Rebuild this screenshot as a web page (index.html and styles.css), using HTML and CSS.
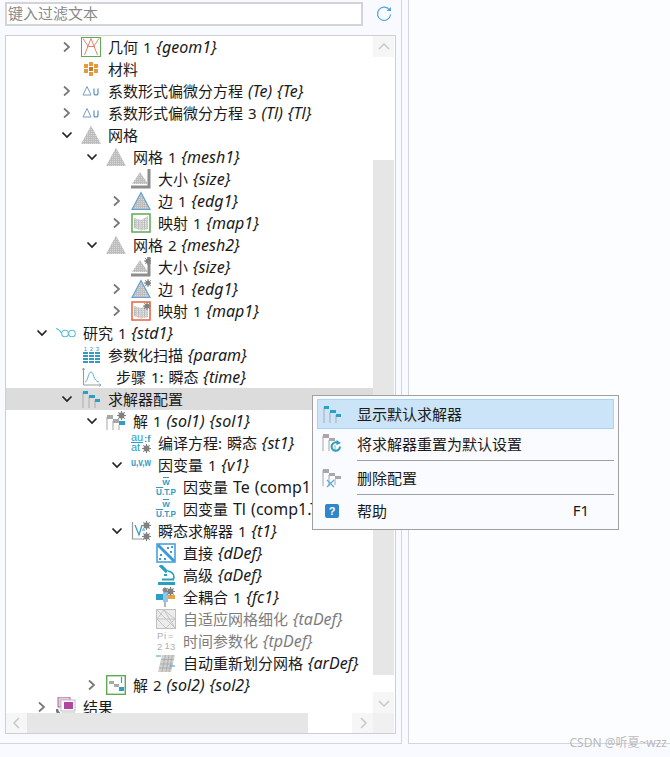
FILE: index.html
```html
<!DOCTYPE html>
<html>
<head>
   <meta charset="UTF-8">
   <link rel="stylesheet" href="styles.css">
</head>
<body>

<!-- icon sheet -->
<svg class="sheet" xmlns="http://www.w3.org/2000/svg">
   <defs>
      <pattern id="dots" width="2" height="2" patternUnits="userSpaceOnUse">
         <rect width="2" height="2" fill="#bcbcbc"/>
         <rect width="1" height="1" fill="#dadada"/>
      </pattern>
   </defs>
   <symbol id="chev-r" viewBox="0 0 12 12"><path d="M3 1.500 L8 6 L3 10.500" fill="none" stroke="#777" stroke-width="1.700"/></symbol>
   <symbol id="chev-d" viewBox="0 0 12 12"><path d="M1.500 3.500 L6 8 L10.500 3.500" fill="none" stroke="#222" stroke-width="1.700"/></symbol>
   <symbol id="gear" viewBox="0 0 8 8"><circle cx="4" cy="4" r="2.600" fill="#808080"/><path d="M4 0V8M0 4H8M1.200 1.200L6.800 6.800M6.800 1.200L1.200 6.800" stroke="#808080" stroke-width="1"/></symbol>
   <symbol id="geom" viewBox="0 0 20 20">
      <rect x=".5" y=".5" width="19" height="19" fill="#fff" stroke="#5cab50"/>
      <path d="M2 1.500 L7 9 M18 1.500 L13 9 M10 1.500 L3.500 18 M10 1.500 L16.500 18 M6 9.500 H14" fill="none" stroke="#e8836c" stroke-width="1"/>
   </symbol>
   <symbol id="material" viewBox="0 0 20 20">
      <g fill="#e59a3b">
         <rect x="8" y="3" width="4" height="4"/><rect x="3" y="5" width="4" height="4"/><rect x="13" y="5" width="4" height="4"/>
         <rect x="8" y="8" width="4" height="4" fill="#c9792a"/><rect x="3" y="10" width="4" height="4"/><rect x="13" y="10" width="4" height="4"/>
         <rect x="8" y="13" width="4" height="4"/>
      </g>
   </symbol>
   <symbol id="delta" viewBox="0 0 20 20">
      <path d="M6 5.500 L10 14 H2 Z" fill="none" stroke="#7d9cc4" stroke-width="1"/>
      <path d="M13 7.500 V12 Q13 14 15 14 Q17 14 17 12 V7.500" fill="none" stroke="#5f8fc0" stroke-width="1.200"/>
   </symbol>
   <symbol id="mesh" viewBox="0 0 20 20"><path d="M10 .5 L20 19 H0 Z" fill="url(#dots)"/></symbol>
   <symbol id="size" viewBox="0 0 20 20">
      <path d="M9 3 L17 15 H1 Z" fill="url(#dots)"/>
      <path d="M18 0 V18 H0" fill="none" stroke="#8c8c8c" stroke-width="3"/>
   </symbol>
   <symbol id="edge" viewBox="0 0 20 20"><path d="M10 1.500 L19 18.500 H1 Z" fill="url(#dots)" stroke="#62a2dc" stroke-width="1.200"/></symbol>
   <symbol id="map" viewBox="0 0 20 20">
      <rect x="1" y="1" width="18" height="18" fill="#fff" stroke="#5cab50" stroke-width="1.500"/>
      <path d="M3 5 L10 7 L17 3 V16 L10 17.500 L3 15 Z" fill="url(#dots)"/>
      <path d="M6 6V16M9 7V17M12 6V17M15 4V16" stroke="#f2f2f2" stroke-width=".7"/>
   </symbol>
   <symbol id="map-warn" viewBox="0 0 20 20">
      <rect x="1" y="1" width="18" height="18" fill="#fff" stroke="#e8613a" stroke-width="1.500"/>
      <path d="M3 5 L10 7 L17 3 V16 L10 17.500 L3 15 Z" fill="url(#dots)"/>
      <path d="M6 6V16M9 7V17M12 6V17M15 4V16" stroke="#f2f2f2" stroke-width=".7"/>
   </symbol>
   <symbol id="study" viewBox="0 0 20 20">
      <path d="M0 5.500 Q3 6 5.500 10" fill="none" stroke="#58bcd8" stroke-width="1.100"/>
      <circle cx="9" cy="10.500" r="3.300" fill="none" stroke="#58bcd8" stroke-width="1.100"/>
      <circle cx="16" cy="10.500" r="3.300" fill="none" stroke="#58bcd8" stroke-width="1.100"/>
   </symbol>
   <symbol id="time" viewBox="0 0 20 20">
      <path d="M2.500 1 V18 H20" fill="none" stroke="#999" stroke-width="1"/>
      <path d="M1 3L2.500 1L4 3M18 16.500L20 18L18 19.500" fill="none" stroke="#999" stroke-width=".8"/>
      <path d="M4 15 C7 15 7 5 10 5 C13 5 12 14 18 15" fill="none" stroke="#58b4d4" stroke-width="1"/>
   </symbol>
   <symbol id="solver" viewBox="0 0 20 20">
      <path d="M2 3V19M8 8V19M14 11V19" stroke="#b5b5b5" stroke-width="1.200"/>
      <rect x="2" y="2" width="5" height="3" fill="#2aa0c4"/><rect x="8" y="6" width="6" height="3" fill="#2aa0c4"/><rect x="14" y="10" width="5" height="3" fill="#2aa0c4"/>
   </symbol>
   <symbol id="sol1" viewBox="0 0 20 20">
      <path d="M1 6V19M7 10V19M13 14V19" stroke="#b5b5b5" stroke-width="1.200"/>
      <rect x="1" y="4" width="6" height="4" fill="#a8a8a8"/><rect x="7" y="8" width="6" height="4" fill="#a8a8a8"/><rect x="13" y="10" width="6" height="4" fill="#2aa0c4"/>
      <use href="#gear" x="11" y="0" width="9" height="9"/>
   </symbol>
   <symbol id="transient" viewBox="0 0 20 20">
      <path d="M1.500 1V18H13" fill="none" stroke="#999" stroke-width="1.200"/>
      <path d="M4 4 L8 14 L11 4M11 9H14" fill="none" stroke="#2f9cc4" stroke-width="1.200"/>
      <use href="#gear" x="11" y="0" width="9" height="9"/>
      <use href="#gear" x="11" y="11" width="9" height="9"/>
   </symbol>
   <symbol id="direct" viewBox="0 0 20 20">
      <rect x="1" y="1" width="18" height="18" fill="#fff" stroke="#3d9bd8" stroke-width="1.500"/>
      <path d="M2 2L18 18" stroke="#3d9bd8" stroke-width="3"/>
      <g fill="#3d9bd8"><rect x="11" y="4" width="2" height="2"/><rect x="15" y="3" width="2" height="2"/><rect x="14" y="8" width="2" height="2"/><rect x="4" y="11" width="2" height="2"/><rect x="3" y="15" width="2" height="2"/><rect x="8" y="15" width="2" height="2"/></g>
   </symbol>
   <symbol id="advanced" viewBox="0 0 20 20">
      <path d="M4 0 L11 7" stroke="#2a9fc0" stroke-width="3.200" fill="none"/>
      <path d="M8 10L11 10" stroke="#2a9fc0" stroke-width="2"/>
      <path d="M12 6 C18 7 19 12 17 15" fill="none" stroke="#2a9fc0" stroke-width="1.500"/>
      <rect x="6" y="13.500" width="12" height="2" fill="#2a9fc0"/>
      <rect x="2" y="17" width="17" height="3" fill="#2a9fc0"/>
   </symbol>
   <symbol id="coupled" viewBox="0 0 20 20">
      <rect x="0" y="7" width="7" height="6" fill="#2aa0c4"/><rect x="7" y="5" width="5" height="10" fill="#8ec5ec"/><rect x="12" y="8" width="7" height="4" fill="#eca23d"/>
      <path d="M9 15V20" stroke="#808080" stroke-width="1.200"/>
      <use href="#gear" x="10" y="0" width="9" height="9"/>
      <use href="#gear" x="6" y="0" width="6" height="6"/>
   </symbol>
   <symbol id="adapt" viewBox="0 0 20 20">
      <rect x=".5" y=".5" width="19" height="19" fill="#ececec" stroke="#c0c0c0"/>
      <path d="M1 10L8 1L19 10L10 19ZM1 1L19 19M8 1L19 19M1 10H19" fill="none" stroke="#c4c4c4"/>
   </symbol>
   <symbol id="remesh" viewBox="0 0 20 20">
      <path d="M6 2 H19 L15 19 H2 Z" fill="#d0d0d0"/>
      <path d="M5 6.500H18M4 11H17M3 15H16M9.500 2L6 19M13 2L10 19M16.500 2L13 19" stroke="#a2a2a2" stroke-width=".7"/>
      <path d="M0 3H5M14 13H19" stroke="#3d9bd8" stroke-width="1.200"/>
   </symbol>
   <symbol id="sol2" viewBox="0 0 20 20">
      <rect x=".7" y=".7" width="18.600" height="18.600" fill="#fff" stroke="#5cab50" stroke-width="1.400"/>
      <rect x="3" y="6" width="5" height="3" fill="#a8a8a8"/><rect x="8" y="9" width="5" height="3" fill="#a8a8a8"/><rect x="13" y="12" width="5" height="4" fill="#2aa0c4"/>
      <path d="M15.500 2V8" stroke="#2aa0c4" stroke-width="1.200"/>
   </symbol>
   <symbol id="result" viewBox="0 0 20 20">
      <rect x="2" y="0" width="12" height="10" fill="#e6c6e0" stroke="#b06aa8"/>
      <rect x="5" y="3" width="14" height="11" fill="#fff" stroke="#bbb"/>
      <rect x="8" y="5" width="9" height="7" fill="#b0479e"/>
      <path d="M1 12C1 18 7 18 7 18" stroke="#777" stroke-width="2.500" fill="none"/>
      <rect x="6" y="15" width="13" height="3" fill="#ddd"/>
   </symbol>
   <symbol id="reset" viewBox="0 0 20 20">
      <path d="M1 2V17M7 6V17M13 11V17" stroke="#b5b5b5" stroke-width="1.200"/>
      <rect x="1" y="0" width="6" height="4" fill="#a8a8a8"/><rect x="7" y="4" width="6" height="3" fill="#a8a8a8"/>
      <path d="M18 12.500A4.200 4.200 0 1 1 16 9" fill="none" stroke="#2a9fc0" stroke-width="2"/>
      <path d="M14.500 6L19 9L14.500 11Z" fill="#2a9fc0"/>
   </symbol>
   <symbol id="delete" viewBox="0 0 20 20">
      <path d="M1 2V18M7 7V18M13 11V17" stroke="#b5b5b5" stroke-width="1.200"/>
      <rect x="1" y="1" width="6" height="4" fill="#a8a8a8"/><rect x="7" y="5" width="6" height="3" fill="#a8a8a8"/><rect x="13" y="8" width="6" height="3" fill="#a8a8a8"/>
      <path d="M5 12L12 19M12 12L5 19" stroke="#5da9dd" stroke-width="1.200"/>
   </symbol>
   <symbol id="refresh" viewBox="0 0 16 16">
      <path d="M13.500 4A6.600 6.600 0 1 0 14.600 8.500" fill="none" stroke="#4ea6e0" stroke-width="1.200"/>
      <path d="M10.500 5H15V1Z" fill="#4ea6e0"/>
   </symbol>
</svg>

<div class="app">
   <div class="left-pane">
      <div class="filter-bar">
         <div class="filter-input">键入过滤文本</div>
         <svg class="refresh-btn"><use href="#refresh"/></svg>
      </div>

      <div class="tree-box">
         <div class="tree">
            <div class="row lv1"><svg class="chev"><use href="#chev-r"/></svg><svg class="ico"><use href="#geom"/></svg><span class="label">几何 1 <i>{geom1}</i></span></div>
            <div class="row lv1"><span class="chev"></span><svg class="ico"><use href="#material"/></svg><span class="label">材料</span></div>
            <div class="row lv1"><svg class="chev"><use href="#chev-r"/></svg><svg class="ico"><use href="#delta"/></svg><span class="label">系数形式偏微分方程 <i>(Te) {Te}</i></span></div>
            <div class="row lv1"><svg class="chev"><use href="#chev-r"/></svg><svg class="ico"><use href="#delta"/></svg><span class="label">系数形式偏微分方程 3 <i>(Tl) {Tl}</i></span></div>
            <div class="row lv1"><svg class="chev"><use href="#chev-d"/></svg><svg class="ico"><use href="#mesh"/></svg><span class="label">网格</span></div>
            <div class="row lv2"><svg class="chev"><use href="#chev-d"/></svg><svg class="ico"><use href="#mesh"/></svg><span class="label">网格 1 <i>{mesh1}</i></span></div>
            <div class="row lv3"><span class="chev"></span><svg class="ico"><use href="#size"/></svg><span class="label">大小 <i>{size}</i></span></div>
            <div class="row lv3"><svg class="chev"><use href="#chev-r"/></svg><svg class="ico"><use href="#edge"/></svg><span class="label">边 1 <i>{edg1}</i></span></div>
            <div class="row lv3"><svg class="chev"><use href="#chev-r"/></svg><svg class="ico"><use href="#map"/></svg><span class="label">映射 1 <i>{map1}</i></span></div>
            <div class="row lv2"><svg class="chev"><use href="#chev-d"/></svg><svg class="ico"><use href="#mesh"/></svg><span class="label">网格 2 <i>{mesh2}</i></span></div>
            <div class="row lv3"><span class="chev"></span><svg class="ico"><use href="#size"/><use href="#gear" x="13" y="0" width="8" height="8"/></svg><span class="label">大小 <i>{size}</i></span></div>
            <div class="row lv3"><svg class="chev"><use href="#chev-r"/></svg><svg class="ico"><use href="#edge"/><use href="#gear" x="13" y="0" width="8" height="8"/></svg><span class="label">边 1 <i>{edg1}</i></span></div>
            <div class="row lv3"><svg class="chev"><use href="#chev-r"/></svg><svg class="ico"><use href="#map-warn"/><use href="#gear" x="12" y="1" width="8" height="8"/></svg><span class="label">映射 1 <i>{map1}</i></span></div>
            <div class="row lv0"><svg class="chev"><use href="#chev-d"/></svg><svg class="ico"><use href="#study"/></svg><span class="label">研究 1 <i>{std1}</i></span></div>
            <div class="row lv1"><span class="chev"></span><svg class="ico">
               <g class="bars"><rect x="2" y="7" width="5" height="2"/><rect x="8" y="7" width="5" height="2"/><rect x="14" y="7" width="5" height="2"/><rect x="2" y="10" width="5" height="2"/><rect x="8" y="10" width="5" height="2"/><rect x="14" y="10" width="5" height="2"/><rect x="2" y="13" width="5" height="2"/><rect x="8" y="13" width="5" height="2"/><rect x="14" y="13" width="5" height="2"/><rect x="2" y="16" width="5" height="2"/><rect x="8" y="16" width="5" height="2"/><rect x="14" y="16" width="5" height="2"/></g>
               <text x="4.500" y="6" class="tiny">1</text><text x="10.500" y="6" class="tiny">2</text><text x="16.500" y="6" class="tiny">3</text>
            </svg><span class="label">参数化扫描 <i>{param}</i></span></div>
            <div class="row lv1"><span class="chev"></span><svg class="ico"><use href="#time"/></svg><span class="label step-label">步骤 1: 瞬态 <i>{time}</i></span></div>
            <div class="row lv1 selected"><svg class="chev"><use href="#chev-d"/></svg><svg class="ico"><use href="#solver"/></svg><span class="label">求解器配置</span></div>
            <div class="row lv2"><svg class="chev"><use href="#chev-d"/></svg><svg class="ico"><use href="#sol1"/></svg><span class="label">解 1 <i>(sol1) {sol1}</i></span></div>
            <div class="row lv3"><span class="chev"></span><svg class="ico">
               <text x="0" y="8" class="mini wide">au</text><text x="0" y="18" class="mini wide">at</text><text x="13" y="9" class="mini">:f</text>
               <path d="M0 9.500H12" stroke="#2f9cc4"/><use href="#gear" x="11" y="11" width="9" height="9"/>
            </svg><span class="label">编译方程: 瞬态 <i>{st1}</i></span></div>
            <div class="row lv3"><svg class="chev"><use href="#chev-d"/></svg><svg class="ico"><text x="0" y="11" class="mini large" textLength="20" lengthAdjust="spacingAndGlyphs">u,v,w</text></svg><span class="label">因变量 1 <i>{v1}</i></span></div>
            <div class="row lv4"><span class="chev"></span><svg class="ico">
               <path d="M7 .5H13M0 10.500H7" stroke="#2f9cc4"/>
               <text x="10" y="8" class="mini mid">W</text><text x="0" y="18" class="mini bold" textLength="20" lengthAdjust="spacingAndGlyphs">U.T.P</text>
            </svg><span class="label">因变量 <span class="en">Te (comp1.Te)</span></span></div>
            <div class="row lv4"><span class="chev"></span><svg class="ico">
               <path d="M7 .5H13M0 10.500H7" stroke="#2f9cc4"/>
               <text x="10" y="8" class="mini mid">W</text><text x="0" y="18" class="mini bold" textLength="20" lengthAdjust="spacingAndGlyphs">U.T.P</text>
            </svg><span class="label">因变量 <span class="en">Tl (comp1.Tl)</span></span></div>
            <div class="row lv3"><svg class="chev"><use href="#chev-d"/></svg><svg class="ico"><use href="#transient"/></svg><span class="label">瞬态求解器 1 <i>{t1}</i></span></div>
            <div class="row lv4"><span class="chev"></span><svg class="ico"><use href="#direct"/></svg><span class="label">直接 <i>{dDef}</i></span></div>
            <div class="row lv4"><span class="chev"></span><svg class="ico"><use href="#advanced"/></svg><span class="label">高级 <i>{aDef}</i></span></div>
            <div class="row lv4"><span class="chev"></span><svg class="ico"><use href="#coupled"/></svg><span class="label">全耦合 1 <i>{fc1}</i></span></div>
            <div class="row lv4 disabled"><span class="chev"></span><svg class="ico"><use href="#adapt"/></svg><span class="label">自适应网格细化 <i>{taDef}</i></span></div>
            <div class="row lv4 disabled"><span class="chev"></span><svg class="ico">
               <text x="1" y="8" class="mini gray">P</text><text x="8" y="8" class="mini gray">i</text><text x="12" y="8" class="mini gray">=</text>
               <text x="1" y="19" class="mini gray">2</text><text x="8.500" y="18" class="mini gray">1</text><text x="14" y="19" class="mini gray">3</text>
            </svg><span class="label">时间参数化 <i>{tpDef}</i></span></div>
            <div class="row lv4"><span class="chev"></span><svg class="ico"><use href="#remesh"/></svg><span class="label">自动重新划分网格 <i>{arDef}</i></span></div>
            <div class="row lv2"><svg class="chev"><use href="#chev-r"/></svg><svg class="ico"><use href="#sol2"/></svg><span class="label">解 2 <i>(sol2) {sol2}</i></span></div>
            <div class="row lv0"><svg class="chev"><use href="#chev-r"/></svg><svg class="ico"><use href="#result"/></svg><span class="label">结果</span></div>
         </div>

         <div class="vscroll">
            <div class="sb-btn"><svg class="sb-arrow" viewBox="0 0 12 12"><path d="M1 8L6 3L11 8"/></svg></div>
            <div class="sb-gap-top"></div>
            <div class="sb-thumb-v"></div>
            <div class="sb-gap-bottom"></div>
            <div class="sb-btn"><svg class="sb-arrow" viewBox="0 0 12 12"><path d="M1 4L6 9L11 4"/></svg></div>
         </div>

         <div class="hscroll">
            <div class="sb-btn-h"><svg class="sb-arrow" viewBox="0 0 12 12"><path d="M8 1L3 6L8 11"/></svg></div>
            <div class="sb-thumb-h"></div>
            <div class="sb-gap-h"></div>
            <div class="sb-btn-h"><svg class="sb-arrow" viewBox="0 0 12 12"><path d="M4 1L9 6L4 11"/></svg></div>
         </div>
         <div class="sb-corner"></div>
      </div>
   </div>

   <div class="right-pane"></div>
</div>

<div class="menu">
   <div class="menu-item active"><svg class="menu-ico"><use href="#solver"/></svg><span class="menu-text">显示默认求解器</span></div>
   <div class="menu-item"><svg class="menu-ico"><use href="#reset"/></svg><span class="menu-text">将求解器重置为默认设置</span></div>
   <div class="menu-sep"></div>
   <div class="menu-item"><svg class="menu-ico"><use href="#delete"/></svg><span class="menu-text">删除配置</span></div>
   <div class="menu-sep last"></div>
   <div class="menu-item"><span class="help-ico">?</span><span class="menu-text">帮助</span><span class="menu-key">F1</span></div>
</div>

<div class="watermark">CSDN @听夏~wzz</div>

</body>
</html>
```

FILE: styles.css
```css
html, body {
   margin: 0;
   padding: 0;
}

body {
   position: relative;
   width: 670px;
   height: 757px;
   overflow: hidden;
   background: #f8faff;
   color: #1a1a1a;
   font-family: "Noto Sans", "Noto Sans CJK SC", sans-serif;
   font-size: 15px;
}

.sheet {
   position: absolute;
   width: 0;
   height: 0;
}

.bars {
   fill: #2f9cc4;
}

.tiny {
   font: 6px "Liberation Sans", sans-serif;
   fill: #2f9cc4;
   text-anchor: middle;
}

.mini {
   font: bold 9.500px "Liberation Sans", sans-serif;
   fill: #2f9cc4;
}

.mini.wide {
   font-size: 11px;
   font-weight: normal;
}

.mini.large {
   font-size: 11px;
}

.mini.bold {
   font-size: 8.500px;
}

.mini.mid {
   font-size: 8px;
   text-anchor: middle;
}

.mini.gray {
   fill: #b0b0b0;
   font-weight: normal;
}

.app {
   display: flex;
   height: 745px;
}

.left-pane {
   width: 402px;
   height: 744px;
   border-right: 1px solid #d2d6de;
   border-bottom: 1px solid #d2d6de;
   padding: 2px 0 0 5px;
   box-sizing: border-box;
}

.right-pane {
   flex: 1;
   margin-left: 6px;
   height: 744px;
   background: #fcfdff;
   border-left: 1px solid #d2d6de;
   border-bottom: 1px solid #d2d6de;
   box-sizing: border-box;
}

.filter-bar {
   display: flex;
   align-items: center;
   height: 24px;
}

.filter-input {
   width: 358px;
   height: 24px;
   box-sizing: border-box;
   border: 2px solid #d4d4d4;
   background: #fff;
   color: #8a8a8a;
   line-height: 18px;
   padding-left: 1px;
}

.refresh-btn {
   width: 16px;
   height: 16px;
   margin-left: 13px;
}

.tree-box {
   display: grid;
   grid-template-columns: 367px 21px;
   grid-template-rows: 677px 20px;
   width: 391px;
   height: 699px;
   margin-top: 9px;
   box-sizing: border-box;
   border: 1px solid #cfcfcf;
   background: #fff;
}

.tree {
   overflow: hidden;
}

.row {
   display: flex;
   align-items: center;
   height: 22px;
   white-space: nowrap;
}

.lv0 { padding-left: 30px; }
.lv1 { padding-left: 55px; }
.lv2 { padding-left: 80px; }
.lv3 { padding-left: 105px; }
.lv4 { padding-left: 130px; }

.row.selected {
   background: #dcdcdc;
}

.row.disabled {
   color: #7d7d7d;
}

.chev {
   flex: none;
   width: 12px;
   height: 12px;
}

.ico {
   flex: none;
   width: 20px;
   height: 20px;
   margin-left: 8px;
}

.label {
   margin-left: 7px;
   padding-bottom: 1px;
   line-height: 20px;
   word-spacing: 1px;
}

.label i,
.label .en {
   font-size: 16px;
}

.step-label {
   margin-left: 15px;
}

.vscroll {
   display: flex;
   flex-direction: column;
}

.sb-btn {
   display: flex;
   align-items: center;
   justify-content: center;
   height: 21px;
   background: #f6f6f6;
}

.sb-gap-top {
   height: 103px;
}

.sb-thumb-v {
   height: 515px;
   background: #e6e6e6;
}

.sb-gap-bottom {
   height: 17px;
}

.hscroll {
   display: flex;
}

.sb-btn-h {
   display: flex;
   align-items: center;
   justify-content: center;
   width: 21px;
   background: #f6f6f6;
}

.sb-thumb-h {
   width: 281px;
   background: #e6e6e6;
}

.sb-gap-h {
   width: 44px;
}

.sb-corner {
   background: #f0f0f0;
}

.sb-arrow {
   width: 12px;
   height: 12px;
   fill: none;
   stroke: #c8c8c8;
   stroke-width: 1.500;
}

.menu {
   position: absolute;
   left: 312px;
   top: 395px;
   width: 307px;
   height: 135px;
   padding: 3px 4px;
   box-sizing: border-box;
   background: #f9fbff;
   border: 1px solid #a0a0a0;
}

.menu-item {
   display: flex;
   align-items: center;
   height: 30px;
   box-sizing: border-box;
}

.menu-item.active {
   background: #cce4f7;
   border: 1px solid #a8d3f5;
}

.menu-ico {
   flex: none;
   width: 20px;
   height: 20px;
   margin-left: 5px;
}

.active .menu-ico {
   margin-left: 4px;
}

.help-ico {
   flex: none;
   width: 14px;
   height: 14px;
   margin: 0 3px 0 8px;
   border-radius: 2px;
   background: #2f86c8;
   color: #fff;
   font: bold 11px/14px "Liberation Sans", sans-serif;
   text-align: center;
}

.menu-text {
   margin-left: 15px;
   padding-bottom: 2px;
}

.menu-key {
   margin-left: auto;
   margin-right: 25px;
   padding-bottom: 2px;
}

.menu-sep {
   height: 1px;
   margin: 1px 0 2px 40px;
   background: #a0a0a0;
}

.menu-sep.last {
   margin-bottom: 1px;
}

.watermark {
   position: absolute;
   right: 3px;
   bottom: 5px;
   color: #b9b9b9;
   font-size: 12px;
   line-height: 18px;
}
```
